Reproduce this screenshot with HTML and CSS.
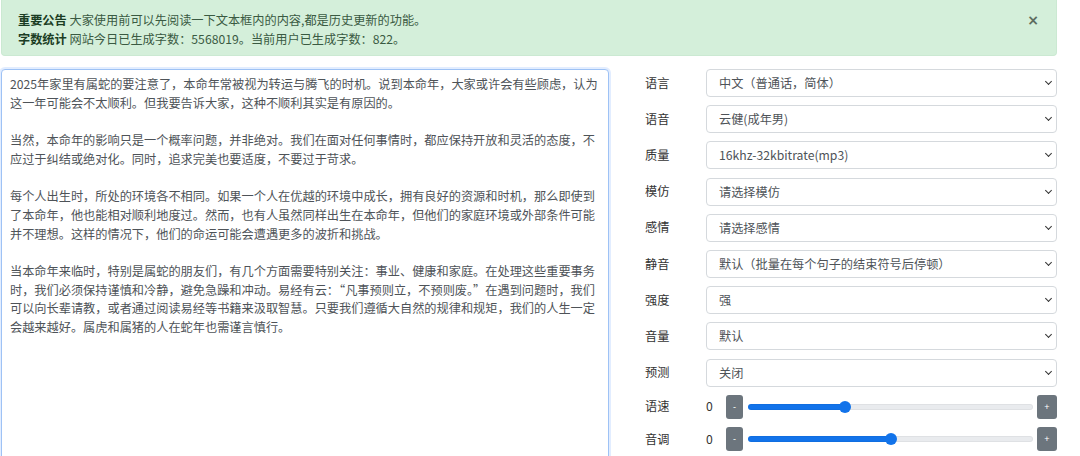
FILE: index.html
```html
<!DOCTYPE html>
<html lang="zh-CN">

<head>
  <meta charset="UTF-8">
  <title>文本转语音</title>
  <link rel="stylesheet" href="styles.css">
</head>

<body>

  <div class="page">

    <!-- Notice -->
    <div class="alert">
      <div class="alert-text">
        <p><strong>重要公告</strong> 大家使用前可以先阅读一下文本框内的内容,都是历史更新的功能。</p>
        <p><strong>字数统计</strong> 网站今日已生成字数：5568019。当前用户已生成字数：822。</p>
      </div>
      <button class="alert-close" type="button">&times;</button>
    </div>

    <div class="main">
      <!-- Text input -->
      <textarea class="editor">2025年家里有属蛇的要注意了，本命年常被视为转运与腾飞的时机。说到本命年，大家或许会有些顾虑，认为这一年可能会不太顺利。但我要告诉大家，这种不顺利其实是有原因的。

当然，本命年的影响只是一个概率问题，并非绝对。我们在面对任何事情时，都应保持开放和灵活的态度，不应过于纠结或绝对化。同时，追求完美也要适度，不要过于苛求。

每个人出生时，所处的环境各不相同。如果一个人在优越的环境中成长，拥有良好的资源和时机，那么即使到了本命年，他也能相对顺利地度过。然而，也有人虽然同样出生在本命年，但他们的家庭环境或外部条件可能并不理想。这样的情况下，他们的命运可能会遭遇更多的波折和挑战。

当本命年来临时，特别是属蛇的朋友们，有几个方面需要特别关注：事业、健康和家庭。在处理这些重要事务时，我们必须保持谨慎和冷静，避免急躁和冲动。易经有云：“凡事预则立，不预则废。”在遇到问题时，我们可以向长辈请教，或者通过阅读易经等书籍来汲取智慧。只要我们遵循大自然的规律和规矩，我们的人生一定会越来越好。属虎和属猪的人在蛇年也需谨言慎行。</textarea>

      <!-- Settings -->
      <div class="settings">
        <label class="field-label">语言</label>
        <div class="select-wrap">
          <select class="field-select">
            <option>中文（普通话，简体）</option>
          </select>
        </div>

        <label class="field-label">语音</label>
        <div class="select-wrap">
          <select class="field-select">
            <option>云健(成年男)</option>
          </select>
        </div>

        <label class="field-label">质量</label>
        <div class="select-wrap">
          <select class="field-select">
            <option>16khz-32kbitrate(mp3)</option>
          </select>
        </div>

        <label class="field-label">模仿</label>
        <div class="select-wrap">
          <select class="field-select">
            <option>请选择模仿</option>
          </select>
        </div>

        <label class="field-label">感情</label>
        <div class="select-wrap">
          <select class="field-select">
            <option>请选择感情</option>
          </select>
        </div>

        <label class="field-label">静音</label>
        <div class="select-wrap">
          <select class="field-select">
            <option>默认（批量在每个句子的结束符号后停顿）</option>
          </select>
        </div>

        <label class="field-label">强度</label>
        <div class="select-wrap">
          <select class="field-select">
            <option>强</option>
          </select>
        </div>

        <label class="field-label">音量</label>
        <div class="select-wrap">
          <select class="field-select">
            <option>默认</option>
          </select>
        </div>

        <label class="field-label">预测</label>
        <div class="select-wrap">
          <select class="field-select">
            <option>关闭</option>
          </select>
        </div>

        <label class="field-label">语速</label>
        <div class="slider-row">
          <span class="slider-value">0</span>
          <button class="step step-minus" type="button">-</button>
          <input class="slider" type="range" min="-100" max="200" value="0" style="--fill: 34%">
          <button class="step step-plus" type="button">+</button>
        </div>

        <label class="field-label">音调</label>
        <div class="slider-row">
          <span class="slider-value">0</span>
          <button class="step step-minus" type="button">-</button>
          <input class="slider" type="range" min="-100" max="100" value="0" style="--fill: 50%">
          <button class="step step-plus" type="button">+</button>
        </div>
      </div>
    </div>

  </div>

</body>

</html>
```

FILE: styles.css
```css
body {
  margin: 0;
  padding: 0;
  font-family: "Noto Sans CJK SC", "Liberation Sans", sans-serif;
  font-size: 12.2px;
  line-height: 18.7px;
  color: #333;
  background: #fff;
  overflow: hidden;
}

.page {
  padding: 0 23px 0 1px;
}

/* Notice */
.alert {
  display: flex;
  justify-content: space-between;
  align-items: flex-start;
  height: 56px;
  box-sizing: border-box;
  padding: 11px 16px 8px 16px;
  background: #d4efda;
  border: 1px solid #cbe9d2;
  border-top: none;
  border-radius: 0 0 4px 4px;
  color: #3a5a42;
}

.alert-text p {
  margin: 0;
}

.alert-text strong {
  color: #1b3d24;
}

.alert-close {
  width: 12px;
  margin: 0 1px 0 0;
  padding: 0;
  border: none;
  background: none;
  font-family: "DejaVu Sans", sans-serif;
  font-size: 14px;
  font-weight: bold;
  line-height: 18px;
  color: #5d6d60;
  cursor: pointer;
}

/* Main area */
.main {
  display: grid;
  grid-template-columns: 608px 1fr;
  column-gap: 36px;
  margin-top: 13px;
}

.editor {
  display: block;
  width: 608px;
  height: 400px;
  box-sizing: border-box;
  padding: 5px 8px;
  border: 1px solid #9ec2f5;
  border-radius: 4px;
  box-shadow: 0 0 0 2px rgba(13, 110, 253, 0.12);
  font-family: "Noto Sans CJK SC", "Liberation Sans", sans-serif;
  font-size: 12.2px;
  line-height: 18.7px;
  color: #4e5358;
  resize: none;
  outline: none;
  overflow: hidden;
}

/* Settings */
.settings {
  display: grid;
  grid-template-columns: 61px 1fr;
  grid-template-rows: repeat(9, 28px) 24px 24px;
  row-gap: 8.2px;
  align-items: center;
}

.field-label {
  color: #333;
}

.select-wrap {
  position: relative;
  height: 28px;
}

.select-wrap::after {
  content: "";
  position: absolute;
  right: 6px;
  top: 10px;
  width: 4px;
  height: 4px;
  border-right: 1.5px solid #333;
  border-bottom: 1.5px solid #333;
  transform: rotate(45deg);
  pointer-events: none;
}

.field-select {
  display: block;
  width: 100%;
  height: 28px;
  box-sizing: border-box;
  padding: 0 28px 0 12px;
  border: 1px solid #d5d9dd;
  border-radius: 4px;
  background: #fff;
  font-family: "Noto Sans CJK SC", "Liberation Sans", sans-serif;
  font-size: 12.2px;
  line-height: 26px;
  color: #4e5358;
  appearance: none;
  -webkit-appearance: none;
}

.slider-row {
  display: flex;
  align-items: center;
  height: 24px;
}

.slider-value {
  width: 20px;
  color: #333;
}

.step {
  height: 24px;
  padding: 0;
  border: none;
  border-radius: 3px;
  background: #6c757d;
  color: #fff;
  font-size: 9px;
  cursor: pointer;
}

.step-minus {
  width: 17px;
}

.step-plus {
  width: 20px;
}

.slider {
  flex: 1;
  height: 12px;
  margin: 0 4px 0 5px;
  background: none;
  -webkit-appearance: none;
  appearance: none;
}

.slider::-webkit-slider-runnable-track {
  height: 6px;
  border-radius: 3px;
  background: linear-gradient(to right, #1273ea var(--fill), #e9ebee var(--fill));
  box-shadow: inset 0 0 0 1px rgba(0, 0, 0, 0.04);
}

.slider::-webkit-slider-thumb {
  -webkit-appearance: none;
  width: 12px;
  height: 12px;
  margin-top: -3px;
  border-radius: 50%;
  background: #1273ea;
  border: none;
}
```
